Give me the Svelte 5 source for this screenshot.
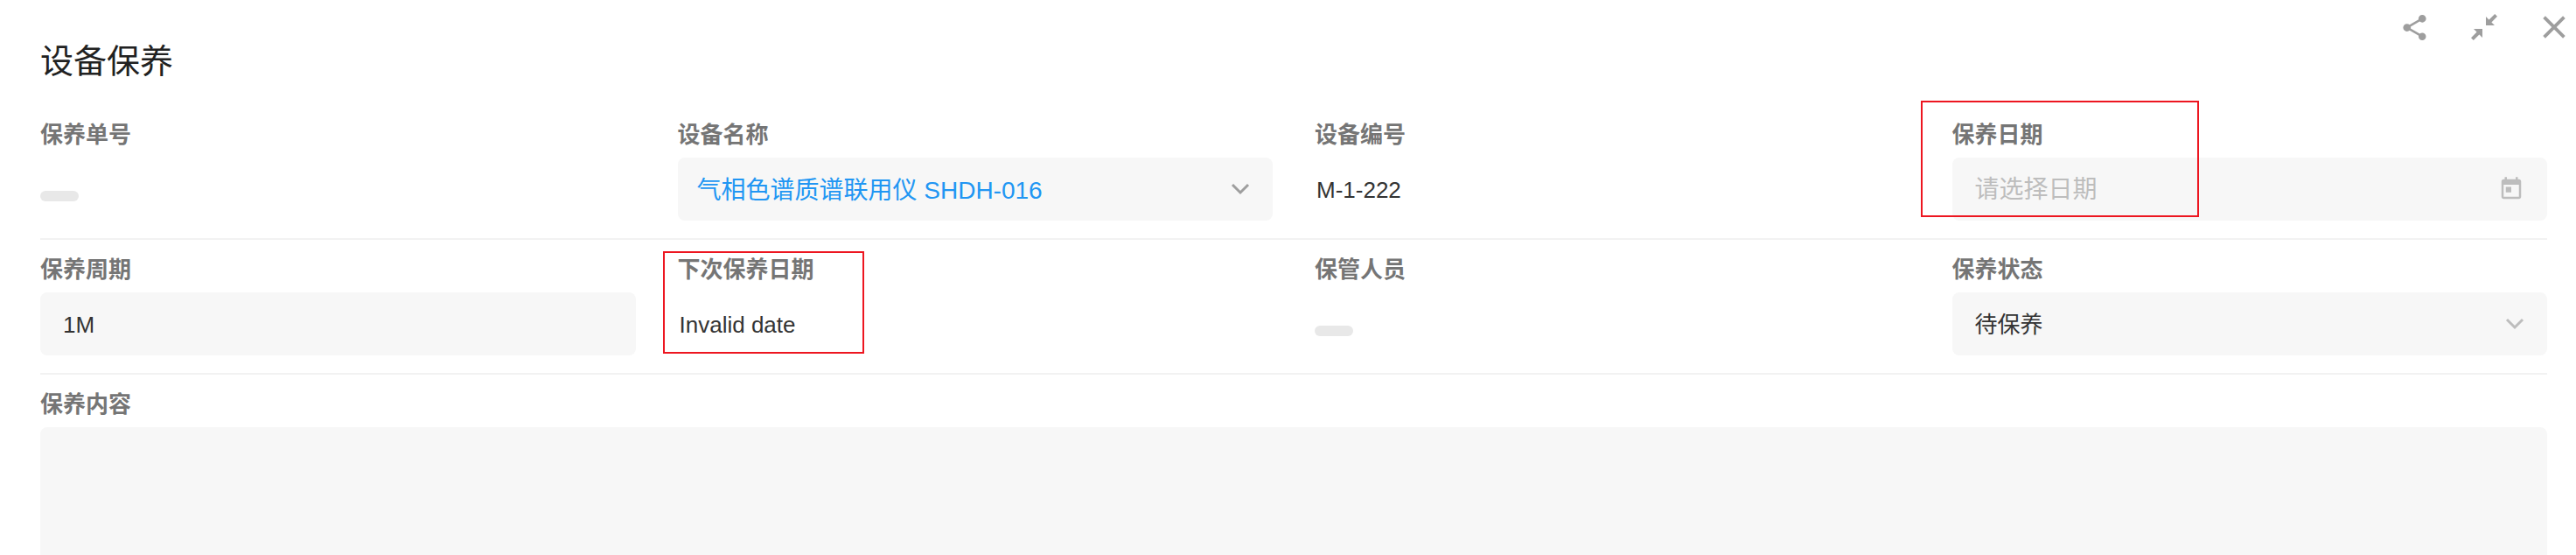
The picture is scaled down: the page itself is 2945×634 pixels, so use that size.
<script lang="ts">
    let device = $state("SHDH-016");
    let date = $state("");
    let period = $state("1M");
    let status = $state("pending");
    let content = $state("");
</script>

{#snippet chevron()}
    <svg class="chevron" width="22" height="14" viewBox="0 0 22 14" aria-hidden="true">
        <path d="M2 2 L11 11 L20 2" fill="none" stroke="currentColor" stroke-width="3" />
    </svg>
{/snippet}

<div class="page">
    <header class="header">
        <h1>设备保养</h1>

        <!-- window actions -->
        <div class="actions">
            <button type="button" aria-label="分享">
                <svg width="35" height="35" viewBox="0 0 24 24" fill="currentColor">
                    <path d="M18 16.08c-.76 0-1.44.3-1.96.77L8.91 12.7c.05-.23.09-.46.09-.7s-.04-.47-.09-.7l7.05-4.11c.54.5 1.25.81 2.04.81 1.66 0 3-1.34 3-3s-1.34-3-3-3-3 1.34-3 3c0 .24.04.47.09.7L8.04 9.81C7.5 9.31 6.79 9 6 9c-1.66 0-3 1.34-3 3s1.34 3 3 3c.79 0 1.5-.31 2.04-.81l7.12 4.16c-.05.21-.08.43-.08.65 0 1.61 1.31 2.92 2.92 2.92 1.61 0 2.92-1.31 2.92-2.92s-1.31-2.92-2.92-2.92z" />
                </svg>
            </button>
            <button type="button" aria-label="缩小">
                <svg width="30" height="30" viewBox="0 0 30 30" fill="currentColor">
                    <path d="M17 3 V13 H27 Z M3 17 H13 V27 Z" />
                    <path d="M21 9 L28.6 1.4 M9 21 L1.4 28.6" stroke="currentColor" stroke-width="4" />
                </svg>
            </button>
            <button type="button" aria-label="关闭">
                <svg width="26" height="26" viewBox="0 0 26 26">
                    <path d="M1.6 1.6 L24.4 24.4 M24.4 1.6 L1.6 24.4" stroke="currentColor" stroke-width="3.8" />
                </svg>
            </button>
        </div>
    </header>

    <form class="form">
        <div class="row">
            <div class="field">
                <span class="label">保养单号</span>
                <div class="value"><span class="empty"></span></div>
            </div>
            <div class="field">
                <label class="label" for="device">设备名称</label>
                <div class="control">
                    <select id="device" class="link" bind:value={device}>
                        <option value="SHDH-016">气相色谱质谱联用仪 SHDH-016</option>
                    </select>
                    {@render chevron()}
                </div>
            </div>
            <div class="field">
                <span class="label">设备编号</span>
                <div class="value"><span class="text">M-1-222</span></div>
            </div>
            <div class="field">
                <label class="label" for="date">保养日期</label>
                <div class="control light">
                    <input id="date" class="date" type="text" placeholder="请选择日期" bind:value={date} />
                    <svg class="calendar" width="30" height="30" viewBox="0 0 24 24" fill="currentColor" aria-hidden="true">
                        <path d="M19 3h-1V1h-2v2H8V1H6v2H5c-1.11 0-1.99.9-1.99 2L3 19c0 1.1.89 2 2 2h14c1.1 0 2-.9 2-2V5c0-1.1-.9-2-2-2zm0 16H5V8h14v11zM7 10h5v5H7z" />
                    </svg>
                </div>
                <div class="mark mark-date"></div>
            </div>
        </div>

        <div class="row">
            <div class="field">
                <label class="label" for="period">保养周期</label>
                <div class="control">
                    <input id="period" type="text" bind:value={period} />
                </div>
            </div>
            <div class="field">
                <span class="label">下次保养日期</span>
                <div class="value"><span class="text">Invalid date</span></div>
                <div class="mark mark-next"></div>
            </div>
            <div class="field">
                <span class="label">保管人员</span>
                <div class="value"><span class="empty"></span></div>
            </div>
            <div class="field">
                <label class="label" for="status">保养状态</label>
                <div class="control light">
                    <select id="status" bind:value={status}>
                        <option value="pending">待保养</option>
                    </select>
                    {@render chevron()}
                </div>
            </div>
        </div>

        <div class="content">
            <label class="label" for="content">保养内容</label>
            <textarea id="content" bind:value={content}></textarea>
        </div>
    </form>
</div>

<style>
    :global(body) {
        margin: 0;
        background: #fff;
    }

    .page {
        min-height: 100vh;
        display: flex;
        flex-direction: column;
        color: #333;
        font-family: "Liberation Sans", "Noto Sans CJK SC", sans-serif;
        font-size: 26px;
    }

    .header {
        display: flex;
        justify-content: space-between;
        padding-left: 46px;
        padding-right: 5px;
        height: 120px;
    }
    h1 {
        margin: 0;
        padding-top: 42px;
        font-size: 38px;
        line-height: 56px;
        font-weight: normal;
        color: #212121;
    }

    .actions {
        display: flex;
        gap: 40px;
        padding-top: 11px;
    }
    .actions button {
        display: flex;
        align-items: center;
        justify-content: center;
        width: 40px;
        height: 40px;
        padding: 0;
        border: none;
        background: none;
        color: #9e9e9e;
        cursor: pointer;
    }
    .actions svg {
        flex: none;
    }

    .form {
        flex: 1;
        display: flex;
        flex-direction: column;
        padding-left: 46px;
        padding-right: 33px;
    }

    .row {
        display: grid;
        grid-template-columns: repeat(4, 1fr);
        column-gap: 48px;
        padding-bottom: 20px;
        border-bottom: 2px solid #f2f2f2;
    }

    .field {
        position: relative;
        min-width: 0;
    }

    .label {
        display: block;
        padding-top: 16px;
        padding-bottom: 8px;
        line-height: 36px;
        font-weight: bold;
        color: #757575;
    }

    .value {
        display: flex;
        align-items: center;
        height: 72px;
    }
    .value .text {
        padding-top: 2px;
        padding-left: 2px;
    }
    /* placeholder pill for a value that is not set */
    .empty {
        width: 44px;
        height: 12px;
        margin-top: 16px;
        border-radius: 6px;
        background: #e8e8e8;
    }

    .control {
        display: flex;
        align-items: center;
        height: 72px;
        padding-right: 26px;
        border-radius: 8px;
        background: #f7f7f7;
        color: #9e9e9e;
    }
    .control.light {
        color: #bdbdbd;
    }
    .control input,
    .control select {
        flex: 1;
        box-sizing: border-box;
        min-width: 0;
        height: 72px;
        padding: 2px 0 0 26px;
        border: none;
        outline: none;
        appearance: none;
        background: none;
        font: inherit;
        color: #333;
    }
    .control select.link {
        padding-left: 22px;
        font-size: 28px;
        color: #2196f3;
    }
    .control input.date {
        font-size: 28px;
    }
    .control input::placeholder {
        color: #bdbdbd;
        opacity: 1;
    }
    .chevron,
    .calendar {
        flex: none;
    }

    .content {
        flex: 1;
        display: flex;
        flex-direction: column;
    }
    textarea {
        flex: 1;
        box-sizing: border-box;
        width: 100%;
        min-height: 120px;
        padding: 20px 26px;
        border: none;
        outline: none;
        border-radius: 8px 8px 0 0;
        resize: none;
        background: #f7f7f7;
        font: inherit;
        color: #333;
    }

    /* red frames drawn over the fields that need attention */
    .mark {
        position: absolute;
        box-sizing: border-box;
        border: 2px solid #ed1620;
        pointer-events: none;
    }
    .mark-date {
        left: -36px;
        top: -5px;
        width: 318px;
        height: 133px;
    }
    .mark-next {
        left: -17px;
        top: 13px;
        width: 230px;
        height: 117px;
    }
</style>
